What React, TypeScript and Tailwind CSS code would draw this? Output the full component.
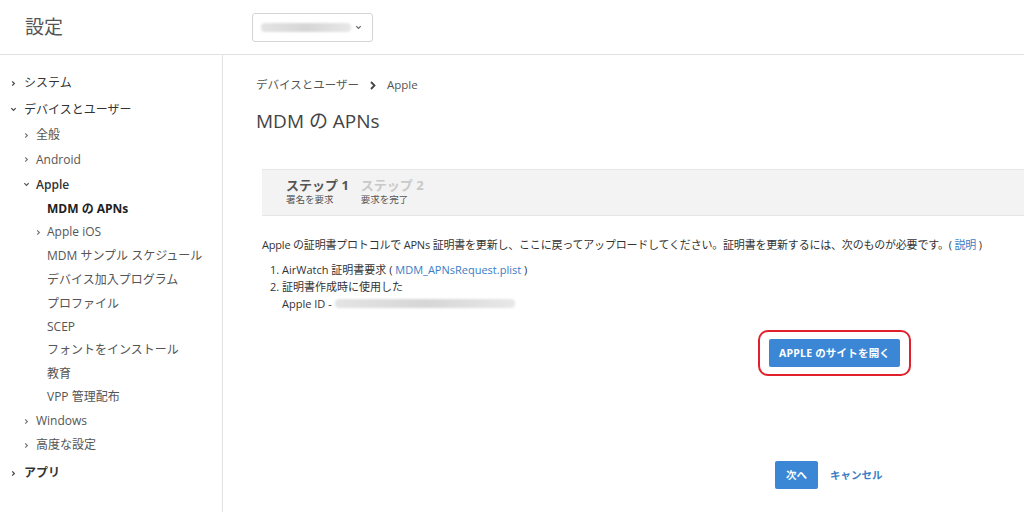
import React from 'react';

const font = { fontFamily: '"Open Sans", "Noto Sans CJK JP", sans-serif' };

const Chevron = ({ open = false, className = '' }: { open?: boolean; className?: string }) => (
    <svg width="7" height="7" viewBox="0 0 8 8" className={className}>
        {open ? (
            <path d="M1.5 2.5 L4 5 L6.5 2.5" fill="none" stroke="currentColor" strokeWidth="1.4" />
        ) : (
            <path d="M2.5 1.5 L5 4 L2.5 6.5" fill="none" stroke="currentColor" strokeWidth="1.4" />
        )}
    </svg>
);

const Blur = ({ w, className = '' }: { w: number; className?: string }) => (
    <span
        className={`inline-block h-[9px] rounded-sm bg-gradient-to-r from-[#e4e4e4] via-[#d6d6d6] to-[#e8e8e8] blur-[1px] ${className}`}
        style={{ width: w }}
    />
);

const App = () => {
    return (
        <div className="w-[1024px] h-[512px] bg-white overflow-hidden flex flex-col text-[#333]" style={font}>
            {/* Header */}
            <div className="h-[55px] shrink-0 border-b border-[#e2e2e2] flex items-center">
                <div className="w-[252px] pl-[25px] text-[19px] text-[#555]">設定</div>
                <div className="w-[121px] h-[29px] border border-[#d4d4d4] rounded-[3px] flex items-center pl-[8px] pr-[10px] gap-[4px]">
                    <Blur w={90} />
                    <Chevron open className="text-[#666] ml-auto" />
                </div>
            </div>

            <div className="flex flex-1 min-h-0">
                {/* Sidebar */}
                <div className="w-[223px] shrink-0 border-r border-[#e2e2e2] text-[12px] pt-[15px]">
                    <div className="flex flex-col">
                        <div className="h-[26px] flex items-center pl-[10px] gap-[7px] text-[#333]"><Chevron className="text-[#444]" />システム</div>
                        <div className="h-[27px] flex items-center pl-[10px] gap-[7px] text-[#333]"><Chevron open className="text-[#444]" />デバイスとユーザー</div>
                        <div className="h-[24px] flex items-center pl-[23px] gap-[6px] text-[#555]"><Chevron className="text-[#777]" />全般</div>
                        <div className="h-[25px] flex items-center pl-[23px] gap-[6px] text-[#555]"><Chevron className="text-[#777]" />Android</div>
                        <div className="h-[25px] flex items-center pl-[23px] gap-[6px] text-[#333] font-semibold"><Chevron open className="text-[#555]" />Apple</div>
                        <div className="h-[23px] flex items-center pl-[47px] text-[#222] font-bold">MDM の APNs</div>
                        <div className="h-[24px] flex items-center pl-[35px] gap-[5px] text-[#555]"><Chevron className="text-[#777]" />Apple iOS</div>
                        <div className="h-[24px] flex items-center pl-[47px] text-[#555]">MDM サンプル スケジュール</div>
                        <div className="h-[24px] flex items-center pl-[47px] text-[#555]">デバイス加入プログラム</div>
                        <div className="h-[23px] flex items-center pl-[47px] text-[#555]">プロファイル</div>
                        <div className="h-[23px] flex items-center pl-[47px] text-[#555]">SCEP</div>
                        <div className="h-[24px] flex items-center pl-[47px] text-[#555]">フォントをインストール</div>
                        <div className="h-[23px] flex items-center pl-[47px] text-[#555]">教育</div>
                        <div className="h-[24px] flex items-center pl-[47px] text-[#555]">VPP 管理配布</div>
                        <div className="h-[24px] flex items-center pl-[23px] gap-[6px] text-[#555]"><Chevron className="text-[#777]" />Windows</div>
                        <div className="h-[24px] flex items-center pl-[23px] gap-[6px] text-[#555]"><Chevron className="text-[#777]" />高度な設定</div>
                        <div className="h-[32px] flex items-center pl-[10px] gap-[7px] text-[#333] font-semibold"><Chevron className="text-[#444]" />アプリ</div>
                    </div>
                </div>

                {/* Main */}
                <div className="flex-1 pl-[33px] pt-[22px]">
                    <div className="flex items-center text-[11.5px] text-[#555] h-[16px]">
                        デバイスとユーザー
                        <svg width="8" height="9" viewBox="0 0 8 9" className="mx-[10px] text-[#444]">
                            <path d="M2 1 L5.5 4.5 L2 8" fill="none" stroke="currentColor" strokeWidth="1.8" />
                        </svg>
                        Apple
                    </div>
                    <h1 className="mt-[15px] text-[19px] text-[#444] leading-[26px]">MDM の APNs</h1>

                    <div className="mt-[35px] ml-[6px] h-[47px] bg-[#f3f3f3] border-y border-[#e6e6e6] flex items-center pl-[24px] gap-[12px]">
                        <div className="flex flex-col">
                            <span className="text-[13px] font-bold text-[#555] leading-[15px]">ステップ 1</span>
                            <span className="text-[9.5px] text-[#555] leading-[14px]">署名を要求</span>
                        </div>
                        <div className="flex flex-col">
                            <span className="text-[13px] font-bold text-[#c9c9c9] leading-[15px]">ステップ 2</span>
                            <span className="text-[9.5px] text-[#555] leading-[14px]">要求を完了</span>
                        </div>
                    </div>

                    <div className="ml-[6px] mt-[21px] text-[11px] text-[#333] tracking-[-0.2px] whitespace-nowrap">
                        Apple の証明書プロトコルで APNs 証明書を更新し、ここに戻ってアップロードしてください。証明書を更新するには、次のものが必要です。( <span className="text-[#3a7dc4]">説明</span> )
                    </div>
                    <div className="ml-[14px] mt-[7px] text-[11px] text-[#333] leading-[17px]">
                        <div>1. AirWatch 証明書要求 ( <span className="text-[#3a7dc4]">MDM_APNsRequest.plist</span> )</div>
                        <div>2. 証明書作成時に使用した</div>
                        <div className="pl-[12px] flex items-center gap-[3px]">Apple ID - <Blur w={180} /></div>
                    </div>

                    <div className="flex ml-[502px] mt-[18px]">
                        <div className="border-2 border-[#e0202a] rounded-[10px] px-[9px] py-[7px]">
                            <button className="h-[28px] px-[10px] bg-[#3b87d5] text-white text-[10.5px] font-bold rounded-[2px] tracking-[0.2px]">
                                APPLE のサイトを開く
                            </button>
                        </div>
                    </div>

                    <div className="flex items-center ml-[519px] mt-[85px] gap-[12px]">
                        <button className="h-[28px] w-[43px] bg-[#3b87d5] text-white text-[10.5px] font-bold rounded-[2px]">次へ</button>
                        <span className="text-[#3a7dc4] text-[10.5px] font-bold">キャンセル</span>
                    </div>
                </div>
            </div>
        </div>
    );
};

export default App;
